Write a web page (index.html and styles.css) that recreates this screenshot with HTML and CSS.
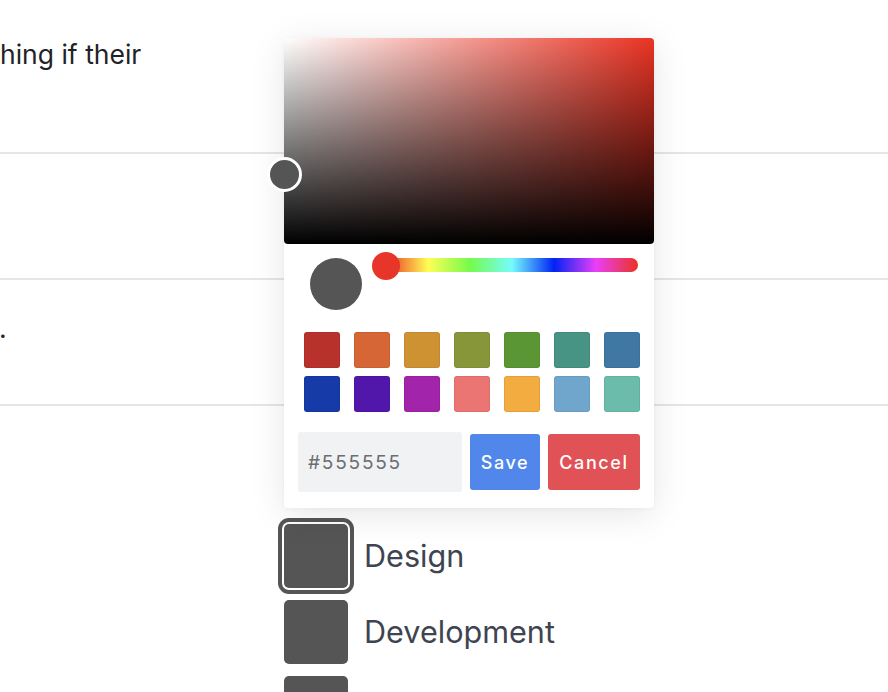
FILE: index.html
```html
<!DOCTYPE html>
<html lang="en">
<head>
<meta charset="utf-8">
<title>Color picker</title>
<link rel="stylesheet" href="styles.css">
</head>
<body>
  <div class="table">
    <div class="row row-first"><p class="cell-text">hing if their</p></div>
    <div class="row"></div>
    <div class="row"><p class="cell-text cell-dot">.</p></div>
  </div>

  <ul class="cats">
    <li class="cat"><span class="cat-swatch is-active"></span><span class="cat-name">Design</span></li>
    <li class="cat"><span class="cat-swatch"></span><span class="cat-name">Development</span></li>
    <li class="cat"><span class="cat-swatch"></span><span class="cat-name"></span></li>
  </ul>

  <div class="picker">
    <div class="sv">
      <span class="sv-cursor"></span>
    </div>
    <div class="hue-row">
      <span class="preview"></span>
      <div class="hue">
        <div class="hue-track"></div>
        <span class="hue-thumb"></span>
      </div>
    </div>
    <div class="swatches">
      <span class="sw sw1"></span><span class="sw sw2"></span><span class="sw sw3"></span><span class="sw sw4"></span><span class="sw sw5"></span><span class="sw sw6"></span><span class="sw sw7"></span>
      <span class="sw sw8"></span><span class="sw sw9"></span><span class="sw sw10"></span><span class="sw sw11"></span><span class="sw sw12"></span><span class="sw sw13"></span><span class="sw sw14"></span>
    </div>
    <div class="actions">
      <input class="hex" type="text" value="#555555">
      <button class="btn btn-save">Save</button>
      <button class="btn btn-cancel">Cancel</button>
    </div>
  </div>
</body>
</html>
```

FILE: styles.css
```css
* { box-sizing: border-box; }

html, body {
  margin: 0;
  padding: 0;
  background: #ffffff;
  font-family: Inter, "Noto Sans", "Liberation Sans", sans-serif;
  overflow: hidden;
}

body {
  position: relative;
  width: 888px;
  height: 692px;
}

.table {
  display: flex;
  flex-direction: column;
}

.row {
  height: 126px;
  border-bottom: 2px solid #e5e5e5;
}

.row-first {
  height: 154px;
}

.cell-text {
  margin: 0;
  padding-top: 35px;
  font-size: 26.5px;
  line-height: 39px;
  color: #1f2328;
}

.cell-dot {
  padding-top: 29px;
  margin-left: -1px;
}

.cats {
  list-style: none;
  margin: 118px 0 0 0;
  padding: 0 0 0 284px;
  display: flex;
  flex-direction: column;
  gap: 12px;
}

.cat {
  display: flex;
  align-items: center;
  gap: 16px;
}

.cat-swatch {
  width: 64px;
  height: 64px;
  flex: none;
  border-radius: 5px;
  background: #555555;
}

.cat-swatch.is-active {
  box-shadow: 0 0 0 2px #ffffff, 0 0 0 6px #555555;
}

.cat-name {
  font-size: 30.6px;
  color: #3e4450;
  line-height: 38px;
}

/* popover */
.picker {
  position: absolute;
  left: 284px;
  top: 38px;
  width: 370px;
  background: #ffffff;
  border-radius: 4px;
  box-shadow: 0 6px 36px rgba(0, 0, 0, 0.10), 0 1px 4px rgba(0, 0, 0, 0.04);
  padding-bottom: 16px;
  z-index: 5;
}

.sv {
  position: relative;
  height: 206px;
  border-radius: 4px;
  background:
    linear-gradient(to top, #000000, rgba(0, 0, 0, 0)),
    linear-gradient(to right, #ffffff, #ea3323);
}

.sv-cursor {
  position: absolute;
  left: -17px;
  top: 119px;
  width: 35px;
  height: 35px;
  border-radius: 50%;
  background: #555555;
  border: 3px solid #ffffff;
}

.hue-row {
  display: flex;
  align-items: flex-start;
  padding: 8px 16px 0 26px;
}

.preview {
  width: 52px;
  height: 52px;
  flex: none;
  margin-top: 6px;
  border-radius: 50%;
  background: #555555;
}

.hue {
  position: relative;
  flex: 1;
  height: 28px;
  margin-left: 10px;
}

.hue-track {
  margin: 6px 0 0 14px;
  height: 14px;
  border-radius: 7px;
  background: linear-gradient(to right,
    #ea3323 0%,
    #fffe54 16.66%,
    #75fb4c 33.33%,
    #75fbfd 50%,
    #0023f5 66.66%,
    #ea3ff7 83.33%,
    #ea3323 100%);
}

.hue-thumb {
  position: absolute;
  left: 0;
  top: 0;
  width: 28px;
  height: 28px;
  border-radius: 50%;
  background: #e8352a;
}

.swatches {
  display: grid;
  grid-template-columns: repeat(7, 36px);
  grid-auto-rows: 36px;
  column-gap: 14px;
  row-gap: 8px;
  margin-top: 22px;
  padding: 0 14px 0 20px;
}

.sw {
  border-radius: 3px;
  box-shadow: inset 0 0 0 1px rgba(0, 0, 0, 0.06);
}

.sw1 { background: #b9312b; }
.sw2 { background: #d66635; }
.sw3 { background: #cf9233; }
.sw4 { background: #88963a; }
.sw5 { background: #5b9634; }
.sw6 { background: #479484; }
.sw7 { background: #3e78a3; }
.sw8 { background: #163aa8; }
.sw9 { background: #5116aa; }
.sw10 { background: #a224ab; }
.sw11 { background: #eb7572; }
.sw12 { background: #f2ac3f; }
.sw13 { background: #70a6cb; }
.sw14 { background: #6bbcaa; }

.actions {
  display: flex;
  align-items: center;
  gap: 8px;
  margin-top: 20px;
  padding: 0 14px;
}

.hex {
  width: 164px;
  height: 60px;
  border: none;
  border-radius: 3px;
  background: #f1f2f4;
  padding: 0 0 0 10px;
  font-family: Inter, "Noto Sans", sans-serif;
  font-size: 19px;
  letter-spacing: 1.8px;
  color: #6b6d70;
  outline: none;
}

.btn {
  height: 56px;
  border: none;
  border-radius: 3px;
  color: #ffffff;
  font-family: Inter, "Noto Sans", sans-serif;
  font-size: 18px;
  font-weight: 500;
  letter-spacing: 1.6px;
  padding: 0;
  cursor: pointer;
}

.btn-save {
  width: 70px;
  background: #5186ea;
}

.btn-cancel {
  width: 92px;
  background: #e15257;
}
```
